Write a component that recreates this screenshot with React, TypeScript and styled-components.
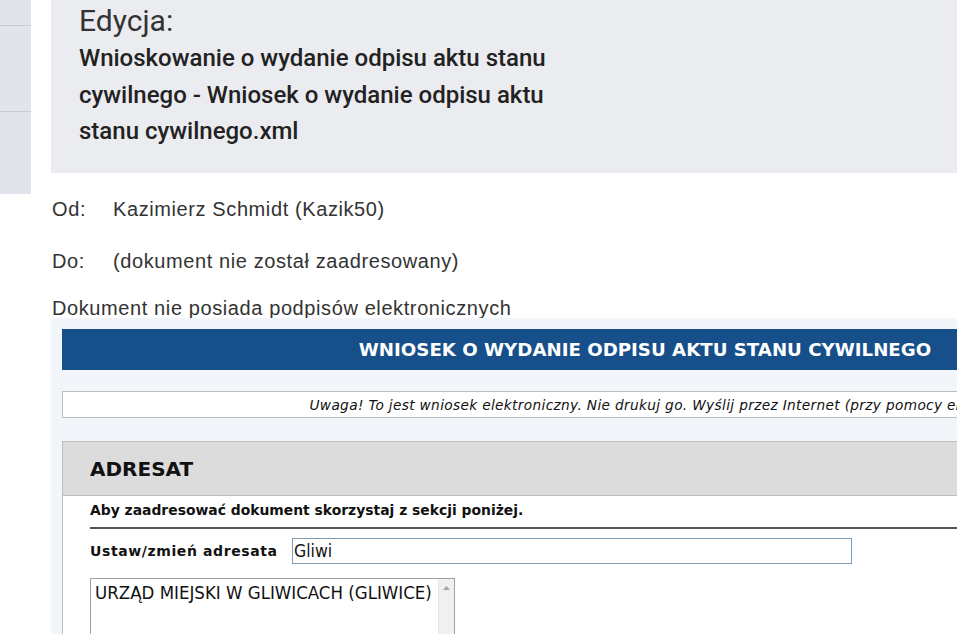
import React from "react";
import styled, { createGlobalStyle } from "styled-components";

const Global = createGlobalStyle`
  html, body { margin: 0; padding: 0; overflow: hidden; background: #ffffff; }
  body { font-family: "Liberation Sans", Arial, sans-serif; width: 957px; height: 634px; }
`;

const Page = styled.div`
  display: flex;
  align-items: flex-start;
  gap: 20px;
  width: 957px;
  height: 634px;
  overflow: hidden;
`;

const Sidebar = styled.nav`
  flex: 0 0 31px;
  height: 194px;
  background: #e1e4eb;
  display: flex;
  flex-direction: column;
`;

const SideItem = styled.div<{ $h: number }>`
  height: ${(p) => p.$h}px;
  border-bottom: 1px solid #c6cad2;
  &:last-child { border-bottom: none; flex: 1; }
`;

const Main = styled.main`
  flex: 1 0 auto;
  min-width: 0;
  display: flex;
  flex-direction: column;
`;

const HeaderBox = styled.header`
  background: #ebecf0;
  height: 173px;
  box-sizing: border-box;
  padding: 2px 0 0 28px;
`;

const EditLabel = styled.div`
  font-family: Roboto, "Liberation Sans", sans-serif;
  font-size: 30px;
  line-height: 38px;
  color: #333;
`;

const FileTitle = styled.h1`
  margin: 0;
  width: 500px;
  font-family: Roboto, "Liberation Sans", sans-serif;
  font-weight: 500;
  font-size: 24px;
  line-height: 36.5px;
  color: #222;
`;

const MetaRow = styled.div<{ $mt: number }>`
  margin-top: ${(p) => p.$mt}px;
  display: flex;
  font-size: 20px;
  letter-spacing: 0.6px;
  line-height: 23px;
  color: #333;
  padding-left: 1px;
`;

const MetaLabel = styled.span`
  flex: 0 0 61px;
`;

const FormPanel = styled.section`
  position: relative;
  margin-top: -2px;
  width: 1188px;
  box-sizing: border-box;
  background: #f2f5fa;
  padding: 11px 11px 0 11px;
  font-family: "DejaVu Sans", Verdana, sans-serif;
`;

const FormTitle = styled.div`
  background: #164f8a;
  height: 41px;
  display: flex;
  align-items: center;
  justify-content: center;
  color: #fff;
  font-weight: bold;
  font-size: 18.2px;
`;

const Notice = styled.div`
  margin-top: 21px;
  height: 27px;
  box-sizing: border-box;
  background: #fff;
  border: 1px solid #bdbdbd;
  display: flex;
  align-items: center;
  justify-content: center;
  padding-left: 23px;
  font-style: italic;
  font-size: 13.7px;
  letter-spacing: 0.34px;
  color: #111;
`;

const Section = styled.div`
  margin-top: 23px;
  background: #fff;
  border-left: 1px solid #bdbdbd;
`;

const SectionHead = styled.div`
  height: 55px;
  box-sizing: border-box;
  background: #dcdcdc;
  border-top: 1px solid #bdbdbd;
  border-bottom: 1px solid #bdbdbd;
  display: flex;
  align-items: center;
  padding-left: 27px;
  font-weight: bold;
  font-size: 20px;
  color: #111;
`;

const SectionBody = styled.div`
  padding: 4px 0 0 27px;
`;

const Hint = styled.div`
  font-weight: bold;
  font-size: 13.9px;
  line-height: 20px;
  padding-bottom: 7px;
  border-bottom: 2px solid #555;
  color: #111;
`;

const FieldRow = styled.div`
  display: flex;
  align-items: center;
  margin-top: 9px;
`;

const FieldLabel = styled.label`
  flex: 0 0 202px;
  font-weight: bold;
  font-size: 14px;
  letter-spacing: 0.6px;
  color: #111;
`;

const TextInput = styled.input`
  width: 560px;
  height: 26px;
  box-sizing: border-box;
  border: 1px solid #7f9db9;
  padding: 0 1px;
  font-family: "DejaVu Sans Condensed", Tahoma, sans-serif;
  font-size: 17.5px;
  color: #111;
  outline: none;
`;

const ListBox = styled.div`
  margin-top: 14px;
  width: 365px;
  height: 80px;
  box-sizing: border-box;
  border: 1px solid #a0a0a0;
  display: flex;
`;

const ListItems = styled.div`
  flex: 1;
  padding: 2px 4px;
  font-family: "DejaVu Sans Condensed", Tahoma, sans-serif;
  font-size: 18.5px;
  line-height: 24px;
  color: #111;
`;

const ScrollTrack = styled.div`
  flex: 0 0 16px;
  background: #f0f0f0;
  border-left: 1px solid #e6e6e6;
  display: flex;
  justify-content: center;
  padding-top: 7px;
  box-sizing: border-box;
`;

export default function App() {
  return (
    <>
      <Global />
      <Page>
        <Sidebar>
          <SideItem $h={25} />
          <SideItem $h={85} />
          <SideItem $h={83} />
        </Sidebar>
        <Main>
          <HeaderBox>
            <EditLabel>Edycja:</EditLabel>
            <FileTitle>
              Wnioskowanie o wydanie odpisu aktu stanu cywilnego - Wniosek o wydanie odpisu aktu stanu cywilnego.xml
            </FileTitle>
          </HeaderBox>
          <MetaRow $mt={25}>
            <MetaLabel>Od:</MetaLabel>
            <span>Kazimierz Schmidt (Kazik50)</span>
          </MetaRow>
          <MetaRow $mt={29}>
            <MetaLabel>Do:</MetaLabel>
            <span>(dokument nie został zaadresowany)</span>
          </MetaRow>
          <MetaRow $mt={24}>Dokument nie posiada podpisów elektronicznych</MetaRow>
          <FormPanel>
            <FormTitle>WNIOSEK O WYDANIE ODPISU AKTU STANU CYWILNEGO</FormTitle>
            <Notice>
              Uwaga! To jest wniosek elektroniczny. Nie drukuj go. Wyślij przez Internet (przy pomocy ePUAP).
            </Notice>
            <Section>
              <SectionHead>ADRESAT</SectionHead>
              <SectionBody>
                <Hint>Aby zaadresować dokument skorzystaj z sekcji poniżej.</Hint>
                <FieldRow>
                  <FieldLabel>Ustaw/zmień adresata</FieldLabel>
                  <TextInput defaultValue="Gliwi" />
                </FieldRow>
                <ListBox>
                  <ListItems>URZĄD MIEJSKI W GLIWICACH (GLIWICE)</ListItems>
                  <ScrollTrack>
                    <svg width="7" height="4" viewBox="0 0 7 4">
                      <path d="M0 4 L3.5 0 L7 4 Z" fill="#a3a3a3" />
                    </svg>
                  </ScrollTrack>
                </ListBox>
              </SectionBody>
            </Section>
          </FormPanel>
        </Main>
      </Page>
    </>
  );
}
